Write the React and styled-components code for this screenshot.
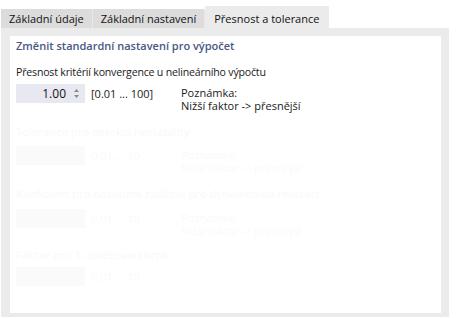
import React from "react";
import styled, { createGlobalStyle } from "styled-components";

const GlobalStyle = createGlobalStyle`
    html, body {
        margin: 0;
        padding: 0;
        background: #ffffff;
    }
    body {
        font-family: "Open Sans", "Noto Sans", sans-serif;
        font-size: 11px;
        color: #1a1a1a;
    }
`

const Dialog = styled.div`
    width: 457px;
    height: 318px;
    padding: 6px 0 1px 1px;
    box-sizing: border-box;
    display: flex;
    flex-direction: column;
`

const TabBar = styled.div`
    display: flex;
    align-items: flex-end;
    height: 22px;
`

const Tab = styled.div`
    height: ${p => (p.active ? "22px" : "19px")};
    padding: 0 ${p => (p.active ? "9px" : "8px")};
    display: flex;
    align-items: center;
    box-sizing: border-box;
    background: ${p => (p.active ? "#ebebeb" : "#dcdcdc")};
    border-right: 1px solid ${p => (p.active ? "#ebebeb" : "#e8e8e8")};
    color: #111;
    white-space: nowrap;
    padding-top: ${p => (p.active ? "2px" : "0")};
`

const Frame = styled.div`
    flex: 1;
    width: 448px;
    background: #ebebeb;
    padding: 8px 8px 4px 9px;
    box-sizing: border-box;
    display: flex;
`

const Panel = styled.div`
    flex: 1;
    background: #ffffff;
    padding: 1px 6px 0 6px;
    display: flex;
    flex-direction: column;
`

const SectionTitle = styled.div`
    font-weight: 600;
    color: ${p => (p.ghost ? "#fafafa" : "#4a5785")};
    height: 18px;
    line-height: 18px;
    white-space: nowrap;
`

const Label = styled.div`
    margin-top: 8px;
    height: 18px;
    line-height: 18px;
    font-size: 10.6px;
    white-space: nowrap;
    letter-spacing: -0.2px;
`

const Row = styled.div`
    display: flex;
    align-items: flex-start;
    height: 19px;
    margin-top: ${p => p.top || 0}px;
`

const Spin = styled.div`
    width: 69px;
    height: 19px;
    flex-shrink: 0;
    background: ${p => (p.ghost ? "#fafafa" : "#e8e8f1")};
    display: flex;
    align-items: center;
    justify-content: flex-end;
    box-sizing: border-box;
    padding-right: 5px;
    gap: 7px;
    font-size: 12px;
    color: #111;
`

const Range = styled.div`
    margin-left: 6px;
    height: 19px;
    line-height: 19px;
    width: 90px;
    flex-shrink: 0;
    white-space: nowrap;
    color: ${p => (p.ghost ? "#fafafa" : "#1a1a1a")};
`

const Note = styled.div`
    margin-top: 2px;
    display: flex;
    flex-direction: column;
    color: ${p => (p.ghost ? "#fafafa" : "#1a1a1a")};
`

const NoteLine = styled.div`
    height: 13px;
    line-height: 13px;
    white-space: nowrap;
`

const Ghost = styled.div`
    display: flex;
    flex-direction: column;
    margin-top: ${p => p.top}px;
`

function Arrows() {
    return (
        <svg width="7" height="11" viewBox="0 0 7 11">
            <path d="M3.5 1 L6 4 L1 4 Z" fill="#8a8a8a" />
            <path d="M3.5 10 L6 7 L1 7 Z" fill="#8a8a8a" />
        </svg>
    )
}

function NoteText({ ghost }) {
    return (
        <Note ghost={ghost}>
            <NoteLine>Poznámka:</NoteLine>
            <NoteLine>Nižší faktor -&gt; přesnější</NoteLine>
        </Note>
    )
}

function GhostBlock({ top, rowTop = 5, title, note }) {
    return (
        <Ghost top={top}>
            <SectionTitle ghost>{title}</SectionTitle>
            <Row top={rowTop}>
                <Spin ghost />
                <Range ghost>0.01 ... 10</Range>
                {note && <NoteText ghost />}
            </Row>
        </Ghost>
    )
}

export default function App() {
    return (
        <>
            <GlobalStyle />
            <Dialog>
                <TabBar>
                    <Tab>Základní údaje</Tab>
                    <Tab>Základní nastavení</Tab>
                    <Tab active>Přesnost a tolerance</Tab>
                </TabBar>
                <Frame>
                    <Panel>
                        <SectionTitle>Změnit standardní nastavení pro výpočet</SectionTitle>
                        <Label>Přesnost kritérií konvergence u nelineárního výpočtu</Label>
                        <Row top={3}>
                            <Spin>
                                <span>1.00</span>
                                <Arrows />
                            </Spin>
                            <Range>[0.01 ... 100]</Range>
                            <NoteText />
                        </Row>
                        <GhostBlock top={20} title="Tolerance pro detekci nestability" note />
                        <GhostBlock top={20} rowTop={6} title="Koeficient pro násobení zatížení pro dynamickou relaxaci" note />
                        <GhostBlock top={18} rowTop={3} title="Faktor pro 1. zatěžovací krok" />
                    </Panel>
                </Frame>
            </Dialog>
        </>
    )
}
